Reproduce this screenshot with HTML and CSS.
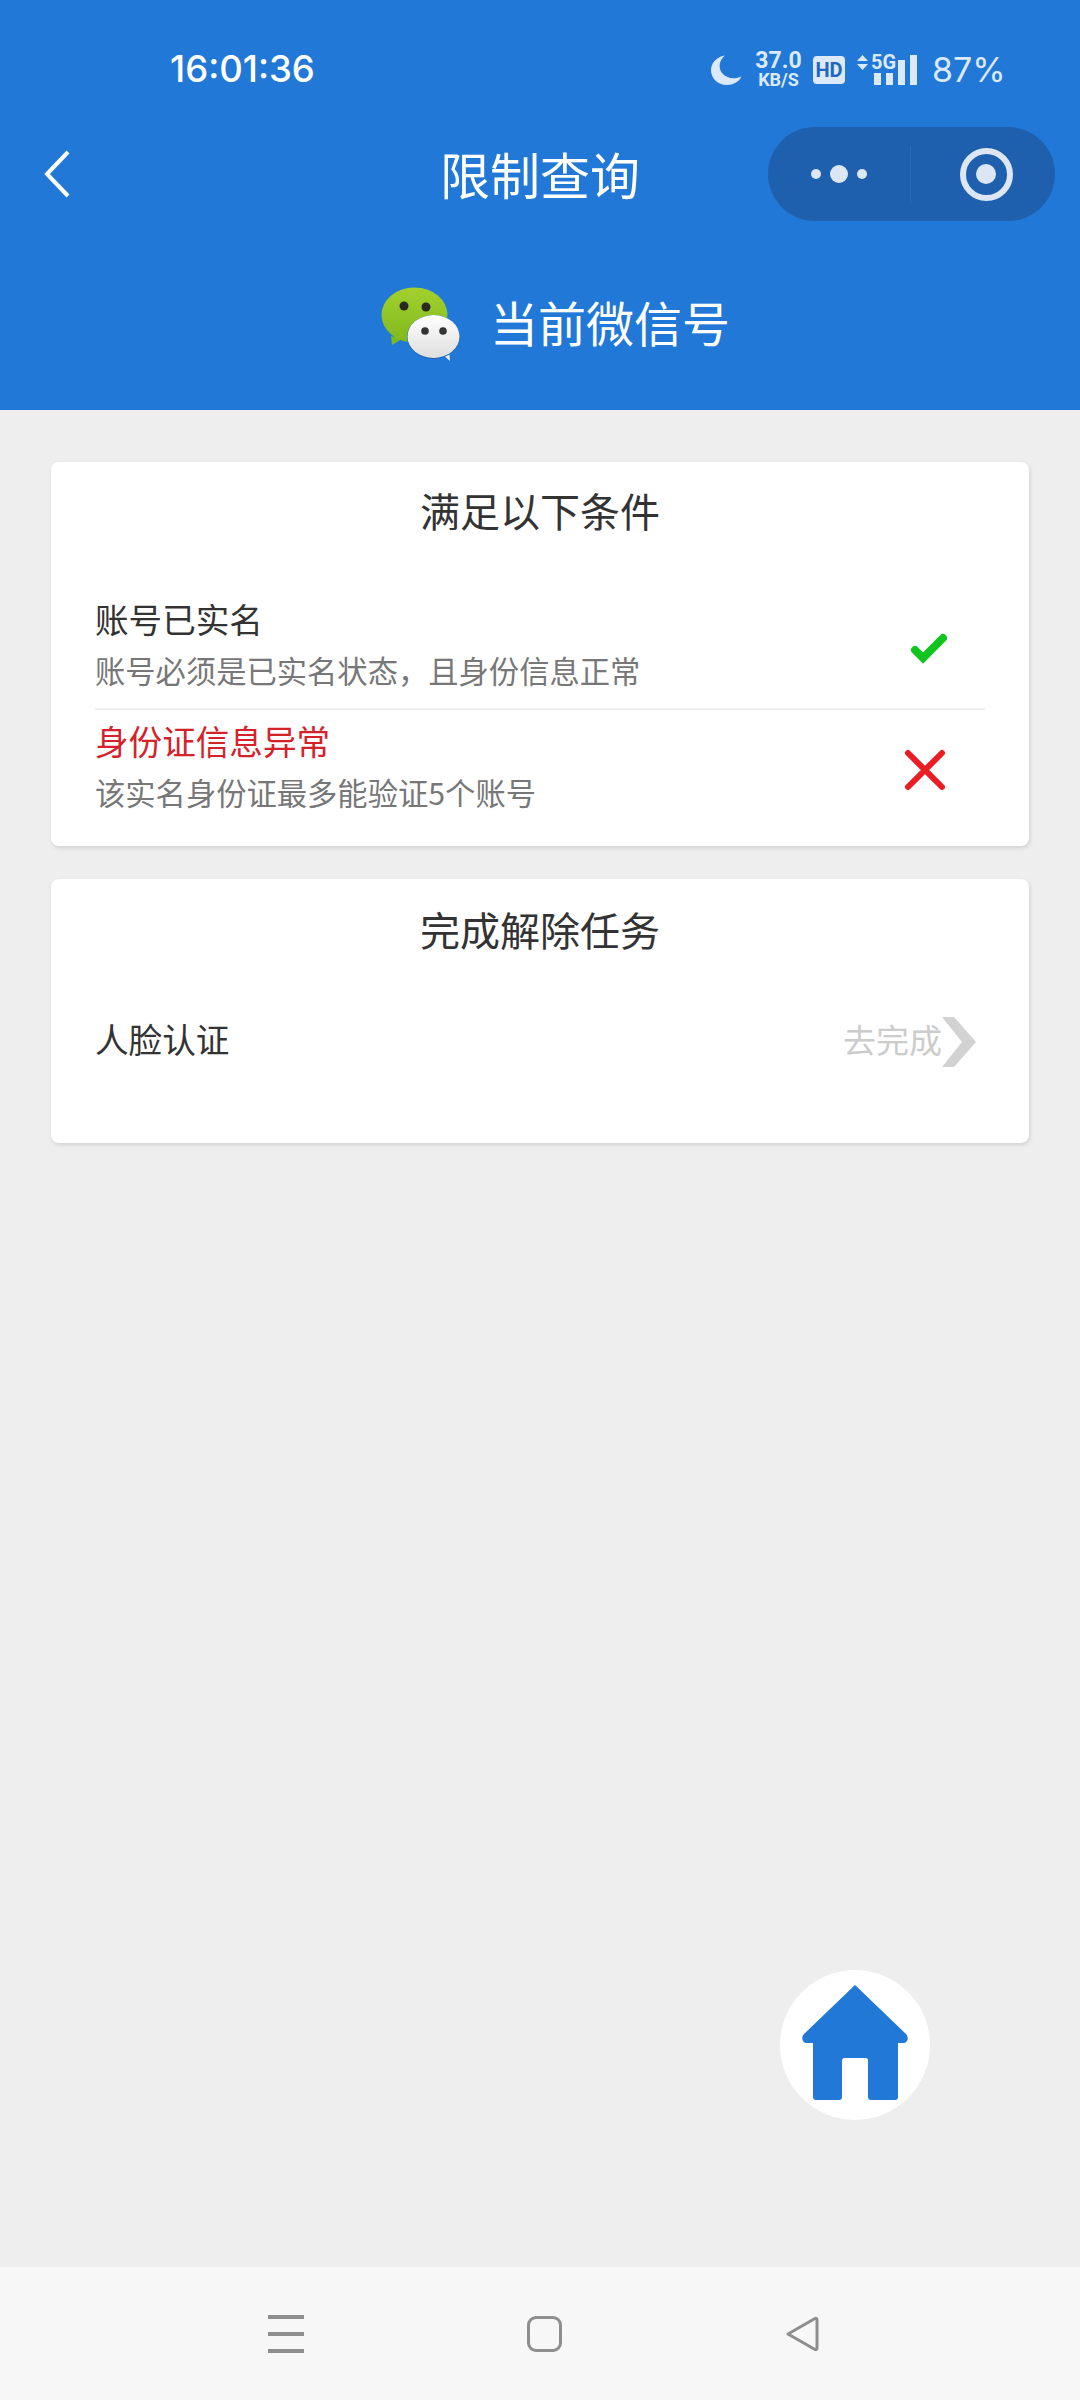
FILE: index.html
```html
<!DOCTYPE html>
<html lang="zh-CN">
<head>
    <meta charset="UTF-8">
    <meta name="viewport" content="width=device-width, initial-scale=1.0">
    <title>限制查询</title>
    <link rel="stylesheet" href="styles.css">
</head>
<body>
    <div class="page">
        <header class="header">
            <div class="status-bar">
                <span class="status-time">16:01:36</span>
                <div class="status-icons">
                    <svg class="icon-moon" viewBox="0 0 31 30"><path d="M14 0.500C8 5 7 13 11 18c4 5 12 7 19.500 3.500C28 27 22 30 15.500 30 7 30 0 23.500 0 15 0 8 6 1.500 14 0.500Z"/></svg>
                    <div class="net-speed">
                        <span class="net-value">37.0</span>
                        <span class="net-unit">KB/S</span>
                    </div>
                    <span class="hd-badge">HD</span>
                    <div class="signal">
                        <svg class="signal-arrows" viewBox="0 0 11 15"><path d="M5.500 0 11 6H0ZM0 9h11l-5.500 6Z"/></svg>
                        <span class="signal-label">5G</span>
                        <div class="signal-bars">
                            <i class="bar bar-1"></i>
                            <i class="bar bar-2"></i>
                            <i class="bar bar-3"></i>
                            <i class="bar bar-4"></i>
                        </div>
                    </div>
                    <span class="battery">87%</span>
                </div>
            </div>

            <div class="nav-row">
                <svg class="back-icon" viewBox="0 0 26 48"><path d="M24 2 3 24l21 22"/></svg>
                <h1 class="nav-title">限制查询</h1>
                <div class="capsule">
                    <div class="capsule-more">
                        <i class="dot"></i>
                        <i class="dot dot-big"></i>
                        <i class="dot"></i>
                    </div>
                    <div class="capsule-close"><i class="ring"></i></div>
                </div>
            </div>

            <div class="account-row">
                <svg class="wechat-icon" viewBox="0 0 80 75">
                    <defs>
                        <linearGradient id="greenFill" x1="0" y1="0" x2="0" y2="1">
                            <stop offset="0" stop-color="#a3d12e"/>
                            <stop offset="1" stop-color="#7fb81e"/>
                        </linearGradient>
                        <linearGradient id="whiteFill" x1="0" y1="0" x2="0" y2="1">
                            <stop offset="0" stop-color="#ffffff"/>
                            <stop offset="1" stop-color="#dedede"/>
                        </linearGradient>
                    </defs>
                    <path d="M10 49l1 9 10-6z" fill="#7fb81e"/>
                    <ellipse cx="33.500" cy="28" rx="33" ry="27.500" fill="url(#greenFill)"/>
                    <circle cx="23" cy="19" r="4.500" fill="#2a2a22"/>
                    <circle cx="45" cy="20" r="4.500" fill="#2a2a22"/>
                    <path d="M60 66l9 8-1-11z" fill="#eeeeee"/>
                    <ellipse cx="52.500" cy="50" rx="26.500" ry="22" fill="#1d65b5"/>
                    <ellipse cx="52.500" cy="49.500" rx="26" ry="21.500" fill="url(#whiteFill)"/>
                    <circle cx="44" cy="44" r="3.800" fill="#333"/>
                    <circle cx="62" cy="44" r="3.800" fill="#333"/>
                </svg>
                <span class="account-text">当前微信号</span>
            </div>
        </header>

        <main class="content">
            <section class="card">
                <h2 class="card-title">满足以下条件</h2>
                <div class="cond-list">
                    <div class="cond-item">
                        <div class="cond-text">
                            <div class="cond-name">账号已实名</div>
                            <div class="cond-desc">账号必须是已实名状态，且身份信息正常</div>
                        </div>
                        <svg class="cond-icon icon-ok" viewBox="0 0 40 40"><path d="M10 20l8 8L38 8"/></svg>
                    </div>
                    <div class="cond-item">
                        <div class="cond-text">
                            <div class="cond-name cond-name-bad">身份证信息异常</div>
                            <div class="cond-desc">该实名身份证最多能验证5个账号</div>
                        </div>
                        <svg class="cond-icon icon-bad" viewBox="0 0 40 40"><path d="M3 3l34 34M37 3 3 37"/></svg>
                    </div>
                </div>
            </section>

            <section class="card card-task">
                <h2 class="card-title">完成解除任务</h2>
                <div class="task-row">
                    <span class="task-name">人脸认证</span>
                    <div class="task-action">
                        <span class="task-link">去完成</span>
                        <svg class="task-arrow" viewBox="0 0 34 50"><path d="M0 0h12l22 25-22 25H0l20-25z"/></svg>
                    </div>
                </div>
            </section>

            <button class="home-btn" aria-label="首页">
                <svg viewBox="0 0 106 115"><path d="M53 0 104 49c3 3 2 9-3 9h-5v54c0 2-1 3-3 3H69c-2 0-3-1-3-3V75c0-1-1-2-2-2H42c-1 0-2 1-2 2v37c0 2-1 3-3 3H14c-2 0-3-1-3-3V58H5c-5 0-6-6-3-9Z"/></svg>
            </button>
        </main>

        <nav class="sys-nav">
            <div class="sys-menu"><i></i><i></i><i></i></div>
            <div class="sys-home"></div>
            <svg class="sys-back" viewBox="0 0 34 36"><path d="M3 18 30 2.500c1-.5 2 0 2 1.500v28c0 1.500-1 2-2 1.500Z"/></svg>
        </nav>
    </div>
</body>
</html>
```

FILE: styles.css
```css
* {
    margin: 0;
    padding: 0;
    box-sizing: border-box;
}
body {
    font-family: "Noto Sans CJK SC", "Noto Sans", sans-serif;
    background: #eee;
    color: #333;
}
.page {
    display: flex;
    flex-direction: column;
    height: 2400px;
}

/* 顶部蓝色区域 */
.header {
    height: 410px;
    padding-top: 50px;
    background: #2178d6;
    color: #fff;
}
.status-bar {
    display: flex;
    align-items: center;
    justify-content: space-between;
    height: 40px;
    margin-bottom: 37px;
    padding: 0 78px 0 170px;
    font-family: Inter, Roboto, sans-serif;
}
.status-time {
    font-size: 36.5px;
    font-weight: 500;
    margin-bottom: 2px;
}
.status-icons {
    display: flex;
    align-items: center;
    color: #dce9fa;
}
.icon-moon {
    width: 31px;
    height: 30px;
    fill: #dce9fa;
    margin-right: 13px;
}
.net-speed {
    display: flex;
    flex-direction: column;
    align-items: center;
    width: 47px;
    margin-right: 11px;
    font-family: Roboto, sans-serif;
    font-weight: 700;
}
.net-value {
    font-size: 23px;
    line-height: 18px;
}
.net-unit {
    font-size: 18px;
    line-height: 16px;
    margin-top: 2px;
}
.hd-badge {
    width: 32px;
    height: 28px;
    margin-right: 12px;
    border-radius: 4px;
    background: #dce9fa;
    color: #2168bd;
    font-family: Roboto, sans-serif;
    font-size: 20px;
    font-weight: 700;
    line-height: 28px;
    text-align: center;
}
.signal {
    position: relative;
    display: flex;
    align-items: flex-start;
    width: 60px;
    height: 30px;
    margin-right: 15px;
}
.signal-arrows {
    width: 11px;
    height: 15px;
    fill: #dce9fa;
}
.signal-label {
    position: absolute;
    left: 14px;
    top: -2px;
    font-family: Roboto, sans-serif;
    font-size: 20px;
    font-weight: 700;
    line-height: 18px;
}
.signal-bars {
    position: absolute;
    left: 17px;
    bottom: 0;
    display: flex;
    align-items: flex-end;
    gap: 5px;
}
.bar {
    display: block;
    width: 7px;
    background: #dce9fa;
}
.bar-1 { height: 12px; }
.bar-2 { height: 12px; }
.bar-3 { height: 25px; }
.bar-4 { height: 30px; }
.battery {
    font-size: 34px;
    line-height: 40px;
    width: 70px;
    white-space: nowrap;
}

.nav-row {
    display: grid;
    grid-template-columns: 1fr auto 1fr;
    align-items: center;
    height: 94px;
    padding: 0 25px 0 44px;
}
.back-icon {
    width: 26px;
    height: 48px;
    fill: none;
    stroke: #fff;
    stroke-width: 4;
}
.nav-title {
    font-size: 50px;
    font-weight: 400;
    line-height: 92px;
    margin-left: -19px;
    margin-bottom: 2px;
}
.capsule {
    justify-self: end;
    display: flex;
    align-items: center;
    width: 287px;
    height: 94px;
    border-radius: 47px;
    background: #1f60ae;
}
.capsule-more {
    display: flex;
    align-items: center;
    justify-content: center;
    gap: 9px;
    width: 143px;
    height: 57px;
    border-right: 1px solid #2a6ab8;
}
.dot {
    display: block;
    width: 10px;
    height: 10px;
    border-radius: 50%;
    background: #dce6f5;
}
.dot-big {
    width: 18px;
    height: 18px;
}
.capsule-close {
    flex: 1;
    display: flex;
    justify-content: center;
    padding-left: 6px;
}
.ring {
    display: flex;
    align-items: center;
    justify-content: center;
    width: 53px;
    height: 53px;
    border: 6px solid #dce6f5;
    border-radius: 50%;
}
.ring::after {
    content: "";
    width: 20px;
    height: 20px;
    border-radius: 50%;
    background: #dce6f5;
}

.account-row {
    display: flex;
    align-items: center;
    gap: 29px;
    height: 75px;
    margin-top: 66px;
    padding-left: 381px;
}
.wechat-icon {
    width: 80px;
    height: 75px;
}
.account-text {
    font-size: 48px;
    line-height: 69px;
    margin-bottom: 6px;
}

/* 卡片 */
.content {
    position: relative;
    flex: 1;
    display: flex;
    flex-direction: column;
    gap: 33px;
    padding: 52px 51px 0;
}
.card {
    height: 384px;
    padding: 22px 44px 0;
    background: #fff;
    border-radius: 8px;
    box-shadow: 1px 2px 4px rgba(0, 0, 0, 0.12);
}
.card-task {
    height: 264px;
    padding-top: 24px;
}
.card-title {
    font-size: 40px;
    font-weight: 400;
    line-height: 52px;
    text-align: center;
    color: #333;
}
.cond-list {
    margin-top: 53px;
}
.cond-item {
    display: flex;
    align-items: center;
    justify-content: space-between;
    height: 121px;
    padding: 5px 40px 17px 0;
}
.cond-item:first-child {
    border-bottom: 2px solid #eee;
}
.cond-name {
    font-size: 33.6px;
    line-height: 50px;
    color: #333;
}
.cond-name-bad {
    color: #d4222a;
}
.cond-desc {
    font-size: 30.3px;
    line-height: 44px;
    margin-top: 4px;
    color: #777;
}
.cond-icon {
    width: 40px;
    height: 40px;
    fill: none;
    stroke-linecap: round;
    overflow: visible;
}
.icon-ok {
    margin-top: 14px;
    stroke: #12c41f;
    stroke-width: 8;
}
.icon-bad {
    margin-top: 10px;
    stroke: #ea1c24;
    stroke-width: 6;
}
.task-row {
    display: flex;
    align-items: center;
    justify-content: space-between;
    height: 50px;
    margin-top: 59px;
    padding-right: 9px;
}
.task-name {
    font-size: 33.6px;
    line-height: 50px;
}
.task-action {
    display: flex;
    align-items: center;
}
.task-link {
    font-size: 33px;
    line-height: 50px;
    color: #ccc;
}
.task-arrow {
    width: 34px;
    height: 50px;
    margin-top: 5px;
    fill: #d2d2d2;
}

/* 悬浮首页按钮 */
.home-btn {
    position: absolute;
    top: 1560px;
    left: 780px;
    display: flex;
    align-items: center;
    justify-content: center;
    width: 150px;
    height: 150px;
    padding-bottom: 6px;
    border: none;
    border-radius: 50%;
    background: #fff;
}
.home-btn svg {
    width: 106px;
    height: 115px;
    fill: #2178d6;
}

/* 系统导航栏 */
.sys-nav {
    display: flex;
    align-items: center;
    justify-content: space-between;
    height: 133px;
    padding: 0 261px 0 268px;
    background: #f7f7f7;
}
.sys-menu {
    display: flex;
    flex-direction: column;
    gap: 13px;
    width: 36px;
}
.sys-menu i {
    display: block;
    height: 4px;
    background: #8e8e8e;
}
.sys-home {
    width: 35px;
    height: 36px;
    border: 3px solid #8e8e8e;
    border-radius: 9px;
}
.sys-back {
    width: 34px;
    height: 36px;
    fill: none;
    stroke: #8e8e8e;
    stroke-width: 3;
    stroke-linejoin: round;
}
```
